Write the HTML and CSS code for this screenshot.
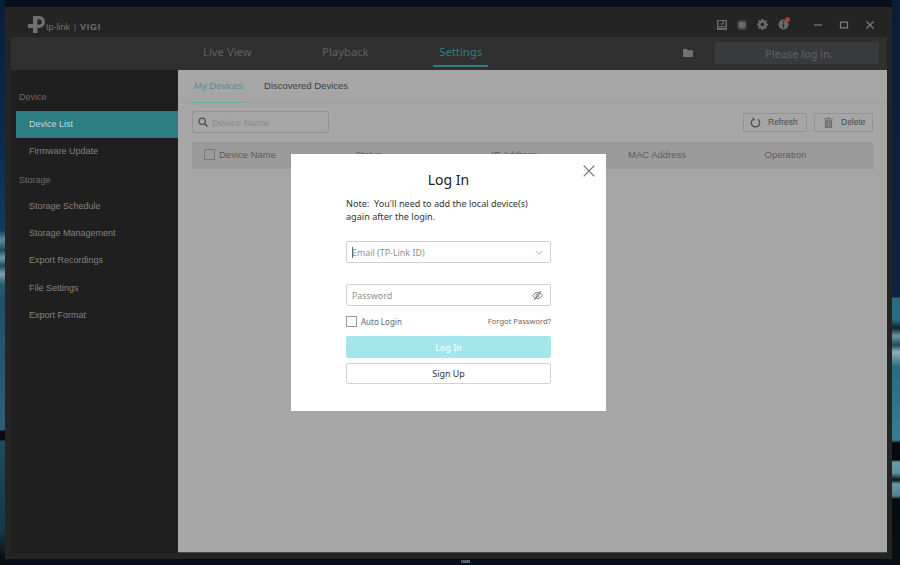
FILE: index.html
```html
<!DOCTYPE html>
<html lang="en">
<head>
<meta charset="utf-8">
<title>VIGI</title>
<link rel="stylesheet" href="styles.css">
</head>
<body>
<div class="window">
  <header class="titlebar">
    <div class="brand">
      <svg class="logo" viewBox="0 0 17 17" width="17" height="17"><path fill="#707070" fill-rule="evenodd" d="M5 0h6a6 6 0 0 1 0 12H9.500v5H5v-5H0V8h5zM9.500 3.200v5.600H11a2.800 2.800 0 0 0 0-5.600z"/></svg>
      <span class="brand-tp">tp-link</span><span class="brand-sep">|</span><span class="brand-vigi">VIGI</span>
    </div>
    <div class="sys-icons">
      <svg viewBox="0 0 10 10" width="10" height="10"><path fill="#6a6a6a" d="M0 0h10v10H0z"/><path fill="#232323" d="M1.500 1h7v7h-7z"/><path fill="#6a6a6a" d="M5.600 1h1.200v3.400H3.400V3.400h2.200zM1.500 6h7v1.200h-7z"/></svg>
      <svg viewBox="0 0 10 10" width="10" height="10"><rect x="1.500" y="1.500" width="7" height="7" rx="1" fill="#6a6a6a"/><path stroke="#6a6a6a" stroke-width=".8" stroke-dasharray="1 1" fill="none" d="M.4 1.500v7M9.600 1.500v7M1.500.4h7M1.500 9.600h7"/></svg>
      <svg viewBox="0 0 12 12" width="11" height="11"><path fill="#6a6a6a" d="M5 0h2l.3 1.600 1.100.5L9.800 1.200l1.100 1.100-.9 1.400.5 1.100L12 5v2l-1.500.3-.5 1.100.9 1.400-1.100 1.100-1.400-.9-1.100.5L7 12H5l-.3-1.500-1.100-.5-1.400.9-1.100-1.100.9-1.400-.5-1.100L0 7V5l1.500-.3.500-1.100-.9-1.400 1.100-1.100 1.400.9 1.100-.5z"/><circle cx="6" cy="6" r="2" fill="#232323"/></svg>
      <span class="info-icon">
        <svg viewBox="0 0 12 12" width="11" height="11"><circle cx="6" cy="6" r="5.500" fill="#6a6a6a"/><path fill="#232323" d="M5.300 2.500h1.400v1.300H5.300zM5.300 5h1.400v4.500H5.300z"/></svg>
        <i class="badge"></i>
      </span>
    </div>
    <div class="win-controls">
      <svg viewBox="0 0 10 10" width="10" height="10"><path stroke="#7c7c7c" stroke-width="1.200" d="M1 5h8"/></svg>
      <svg viewBox="0 0 10 10" width="10" height="10"><path fill="none" stroke="#7c7c7c" stroke-width="1.300" d="M1.500 2.200h7v5.600h-7z"/></svg>
      <svg viewBox="0 0 10 10" width="10" height="10"><path stroke="#7c7c7c" stroke-width="1.200" d="M1.500 1.500l7 7M8.500 1.500l-7 7"/></svg>
    </div>
  </header>

  <nav class="navbar">
    <div class="nav-tabs">
      <span class="nav-tab">Live View</span>
      <span class="nav-tab">Playback</span>
      <span class="nav-tab is-active">Settings</span>
    </div>
    <div class="nav-right">
      <svg viewBox="0 0 10 8" width="10" height="8"><path fill="#717171" d="M0 0h4l1 1.300h5V8H0z"/></svg>
      <div class="login-box">Please log in.</div>
    </div>
  </nav>

  <div class="body-row">
    <aside class="sidebar">
      <div class="side-group">Device</div>
      <div class="side-item is-active">Device List</div>
      <div class="side-item">Firmware Update</div>
      <div class="side-group side-group-2">Storage</div>
      <div class="side-item">Storage Schedule</div>
      <div class="side-item">Storage Management</div>
      <div class="side-item">Export Recordings</div>
      <div class="side-item">File Settings</div>
      <div class="side-item">Export Format</div>
    </aside>

    <main class="content">
      <div class="tabs">
        <span class="tab is-active">My Devices</span>
        <span class="tab">Discovered Devices</span>
      </div>
      <div class="toolbar">
        <div class="search">
          <svg viewBox="0 0 12 12" width="10" height="10"><circle cx="5" cy="5" r="3.800" fill="none" stroke="#4f4f4f" stroke-width="1.500"/><path stroke="#4f4f4f" stroke-width="1.700" d="M8 8l3.400 3.400"/></svg>
          <span>Device Name</span>
        </div>
        <div class="tool-btns">
          <div class="tool-btn tool-refresh">
            <svg viewBox="0 0 12 12" width="11" height="11"><path fill="none" stroke="#4e4e4e" stroke-width="1.400" d="M3.400 2.400a4.600 4.600 0 1 0 5.200 0"/><path fill="#4e4e4e" d="M2.300.3l2.800 1.200-.4 2.900z"/></svg>
            <span>Refresh</span>
          </div>
          <div class="tool-btn tool-delete">
            <svg viewBox="0 0 10 12" width="9" height="11"><path fill="#6d6d6d" d="M0 1.500h3.500V.5h3v1H10v1.200H0zM1 3.500h8V12H1z"/><path stroke="#a6a6a6" stroke-width=".6" d="M3.200 4.500V11M5 4.500V11M6.800 4.500V11"/></svg>
            <span>Delete</span>
          </div>
        </div>
      </div>
      <div class="table-head">
        <div class="th th-first"><i class="check check-dim"></i>Device Name</div>
        <div class="th">Status</div>
        <div class="th">IP Address</div>
        <div class="th">MAC Address</div>
        <div class="th">Operation</div>
      </div>
    </main>
  </div>

  <section class="modal">
    <svg class="modal-close" viewBox="0 0 12 12" width="12" height="12"><path stroke="#707070" stroke-width="1.200" d="M.7.700l10.600 10.600M11.300.7L.7 11.300"/></svg>
    <h1 class="modal-title">Log In</h1>
    <p class="note">Note:&nbsp; You'll need to add the local device(s) again after the login.</p>
    <div class="field field-email">
      <i class="caret"></i><span>Email (TP-Link ID)</span>
      <svg viewBox="0 0 10 6" width="8" height="5"><path fill="none" stroke="#9a9a9a" d="M1 1l4 4 4-4"/></svg>
    </div>
    <div class="field field-pass">
      <span>Password</span>
      <svg viewBox="0 0 12 10" width="11" height="9"><path fill="none" stroke="#7a7a7a" stroke-width="1.100" d="M.6 5c3-4.500 7.800-4.500 10.800 0-3 4.500-7.800 4.500-10.800 0z"/><circle cx="6" cy="5" r="1.700" fill="none" stroke="#7a7a7a"/><path stroke="#7a7a7a" stroke-width="1.200" d="M9.800.3L2.500 9.700"/></svg>
    </div>
    <div class="options">
      <label class="auto"><i class="check"></i>Auto Login</label>
      <span class="forgot">Forgot Password?</span>
    </div>
    <div class="btn btn-primary">Log In</div>
    <div class="btn btn-outline">Sign Up</div>
  </section>
</div>
</body>
</html>
```

FILE: styles.css
```css
* { box-sizing: border-box; }
html, body { height: 100%; margin: 0; }
body {
  padding: 7px 8px 6px 5px;
  overflow: hidden;
  font-family: "Liberation Sans", Arial, sans-serif;
  background-color: #080f1a;
  background-image:
    linear-gradient(180deg, #0a1d38 0, #0b2a4a 130px, #123a5c 230px, #5f8a9a 240px, #1c4a60 250px, #6f9aa6 258px, #1c4a60 266px, #7fa4ae 274px, #2a5c72 284px, #1f5068 300px, #2a6078 430px, #080c10 431px, #080c10 440px, #1f4a60 441px, #16384a 530px, #0a0f14 558px),
    linear-gradient(180deg, #0a1d38 0, #0f2240 297px, #2a6a85 298px, #2a6a85 320px, #0d2230 328px, #6f98a6 336px, #1c4a60 345px, #8fb0ba 352px, #2a6a85 367px, #3a7a95 440px, #060a0e 443px, #060a0e 460px, #6a9aaa 462px, #5a90a0 473px, #0b1216 480px, #6a9aaa 484px, #4c8094 496px, #070b0f 499px, #0a0f14 565px),
    linear-gradient(90deg, #46545c, #5c6a72);
  background-repeat: no-repeat;
  background-size: 5px 100%, 8px 100%, 9px 3px;
  background-position: left top, right top, 461px 560px;
}

.window {
  position: relative;
  height: 552px;
  display: flex;
  flex-direction: column;
  padding: 0 5px 6px 6px;
  background: #242424;
  color: #8a8a8a;
}

/* title bar */
.titlebar { flex: 0 0 30px; display: flex; align-items: center; padding: 0 12px 0 17px; }
.brand { display: flex; align-items: center; color: #6f6f6f; font-size: 9px; margin-top: 6px; }
.logo { margin-right: 1px; margin-top: -1px; }
.brand-tp { margin-top: 3px; }
.brand-sep { margin: 3px 4px 0; font-size: 8px; }
.brand-vigi { margin-top: 3px; font-weight: 700; font-size: 9px; letter-spacing: .7px; }
.sys-icons { margin-left: auto; display: flex; align-items: center; gap: 10px; margin-top: 5px; }
.info-icon { position: relative; display: flex; }
.badge { position: absolute; top: -2px; right: -1px; width: 5px; height: 5px; border-radius: 50%; background: #a83c3c; }
.win-controls { margin-left: 24px; display: flex; align-items: center; gap: 16px; margin-top: 5px; }

/* nav */
.navbar { flex: 0 0 33px; display: flex; align-items: stretch; background: #2f2f2f; padding-left: 186px; }
.nav-tabs { display: flex; gap: 58.500px; }
.nav-tab { padding: 7px 6px 0; font-family: "Noto Sans", sans-serif; font-size: 11.300px; color: #606060; border-bottom: 2px solid transparent; margin-bottom: 3px; }
.nav-tab.is-active { color: #2a7f87; border-bottom-color: #2a7f87; }
.nav-right { margin-left: auto; display: flex; align-items: center; gap: 22px; padding-right: 8px; padding-bottom: 2px; }
.login-box { width: 164px; height: 22px; background: #383a3d; color: #5f6265; font-family: "Noto Sans", sans-serif; font-size: 11px; line-height: 23px; padding-left: 50px; }

.body-row { flex: 1; display: flex; min-height: 0; }

/* sidebar */
.sidebar { flex: 0 0 167px; background: #1f1f1f; padding: 17px 0 0 5px; font-size: 9px; color: #7e7e7e; }
.side-group { height: 24px; line-height: 20px; padding-left: 3px; color: #6a6a6a; }
.side-group-2 { height: 27.300px; line-height: 28.500px; }
.side-item { height: 27.300px; padding-left: 13px; line-height: 27px; color: #828282; }
.side-item.is-active { background: #2b7c83; color: #c2dcde; }

/* main */
.content { flex: 1; min-width: 0; background: #a6a6a6; padding: 0 14px; border-bottom: 1px solid #4a4a4a; color: #555; font-size: 9.500px; }
.tabs { height: 33px; margin: 0 -14px; padding-left: 14px; display: flex; gap: 17px; border-bottom: 1px solid #9e9e9e; }
.tab { padding: 10px 2px 0; height: 33px; color: #3e3e3e; }
.tab.is-active { color: #4e8f98; border-bottom: 1px solid #6fa3aa; }
.toolbar { display: flex; justify-content: space-between; align-items: center; height: 38px; margin-bottom: 1px; }
.search { width: 137px; height: 22px; border: 1px solid #939393; border-radius: 2px; display: flex; align-items: center; gap: 4px; padding-left: 5px; color: #8a8a8a; }
.tool-btns { display: flex; gap: 7px; }
.tool-btn { height: 19px; border: 1px solid #939393; border-radius: 1px; display: flex; align-items: center; font-size: 8.500px; color: #4a4a4a; }
.tool-refresh { width: 64px; padding-left: 6px; gap: 7px; }
.tool-delete { width: 59px; padding-left: 9px; gap: 8px; }
.table-head { height: 27px; background: #9b9b9b; display: grid; grid-template-columns: 151px 136.500px 136.500px 136.500px 1fr; padding: 0 0 2px 12px; align-items: center; color: #5b5b5b; }
.th-first { display: flex; align-items: center; }
.check { display: inline-block; width: 11px; height: 11px; border: 1px solid #8a8a8a; background: #fff; margin-right: 4px; }
.check-dim { background: transparent; border-color: #787878; }

/* modal */
.modal { position: absolute; left: 286px; top: 147px; width: 315px; height: 257px; background: #fff; padding: 0 55px; font-family: "Noto Sans", sans-serif; color: #444; }
.modal-close { position: absolute; right: 11px; top: 11px; }
.modal-title { margin: 0; padding-top: 16px; height: 43px; text-align: center; font-size: 14px; font-weight: 400; line-height: 20px; color: #222; }
.note { margin: 0; font-size: 9.100px; line-height: 13px; color: #333; height: 44px; padding-right: 10px; }
.field { height: 22px; border: 1px solid #d2d2d2; border-radius: 2px; display: flex; align-items: center; justify-content: space-between; padding: 1px 7px 0 5px; font-size: 8.900px; color: #8f8f8f; }
.field-email { justify-content: flex-start; }
.field-email svg { margin-left: auto; }
.caret { width: 1px; height: 11px; background: #666; margin-right: -1px; }
.field-pass { margin-top: 21px; }
.options { display: flex; justify-content: space-between; align-items: center; height: 30px; font-size: 8px; }
.auto { display: flex; align-items: center; color: #666; }
.auto .check { border-color: #999; margin-right: 4px; }
.forgot { color: #666; font-size: 7.600px; }
.btn { height: 22px; border-radius: 2px; text-align: center; line-height: 23px; font-size: 8.900px; }
.btn-primary { background: #a5e6ec; color: #fff; }
.btn-outline { margin-top: 5px; height: 21px; border: 1px solid #d2d2d2; color: #333; line-height: 20px; }
```
